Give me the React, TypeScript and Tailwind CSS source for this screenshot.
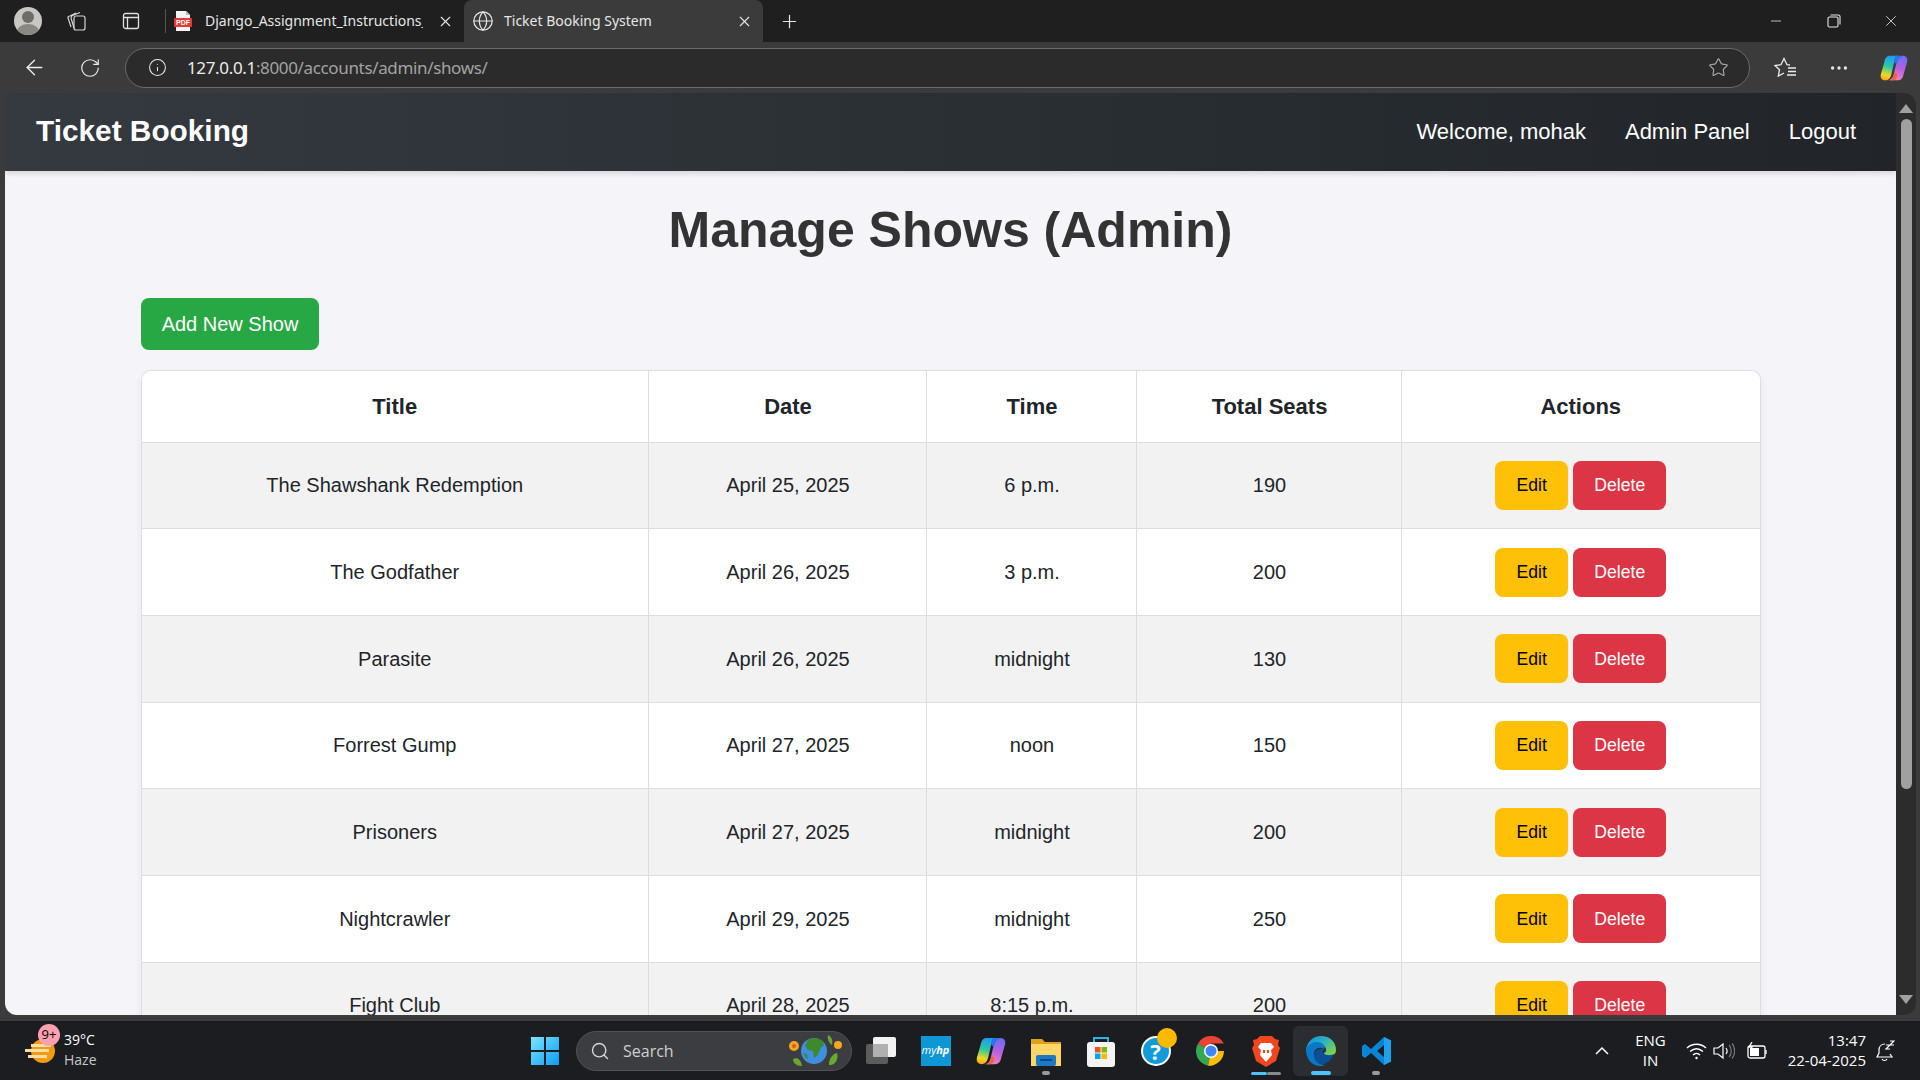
import { ArrowLeft, Ellipsis, Globe, Info, Minus, Plus, RotateCw, Search, Star, X } from "lucide-react";

const shows = [
  { title: "The Shawshank Redemption", date: "April 25, 2025", time: "6 p.m.", seats: 190 },
  { title: "The Godfather", date: "April 26, 2025", time: "3 p.m.", seats: 200 },
  { title: "Parasite", date: "April 26, 2025", time: "midnight", seats: 130 },
  { title: "Forrest Gump", date: "April 27, 2025", time: "noon", seats: 150 },
  { title: "Prisoners", date: "April 27, 2025", time: "midnight", seats: 200 },
  { title: "Nightcrawler", date: "April 29, 2025", time: "midnight", seats: 250 },
  { title: "Fight Club", date: "April 28, 2025", time: "8:15 p.m.", seats: 200 },
];

function Copilot({ size, id }: { size: number; id: string }) {
  return (
    <svg width={size} height={size} viewBox="0 0 32 32">
      <defs>
        <linearGradient id={`${id}a`} x1="0.5" y1="0" x2="0.3" y2="1">
          <stop offset="0" stopColor="#1a9df0" />
          <stop offset="0.45" stopColor="#2fc9a0" />
          <stop offset="0.8" stopColor="#f2d81f" />
          <stop offset="1" stopColor="#f5a623" />
        </linearGradient>
        <linearGradient id={`${id}b`} x1="0.7" y1="0" x2="0.4" y2="1">
          <stop offset="0" stopColor="#6d6df0" />
          <stop offset="0.5" stopColor="#b85fe0" />
          <stop offset="1" stopColor="#f082c0" />
        </linearGradient>
      </defs>
      <path d="M12 2H22C18 3 17 6 16 10L13 23C12 27 10 30 6 30 2 30 0 27 1 23L5 9C6 4 8 2 12 2z" fill={`url(#${id}a)`} />
      <path d="M20 30H10C14 29 15 26 16 22L19 9C20 5 22 2 26 2 30 2 32 5 31 9L27 23C26 28 24 30 20 30z" fill={`url(#${id}b)`} />
      <path d="M18 2h5c2 0 3 1 3 1-3 0-5 2-6 6l-1 3-3-3c1-4 1-6 2-7z" fill="#2477ee" />
      <path d="M10 30c3 0 5-2 6-6l1-3 3 3c-1 4-2 6-5 6z" fill="#f2603c" />
    </svg>
  );
}

function PdfIcon() {
  return (
    <svg width="18" height="22" viewBox="0 0 18 22">
      <path d="M2 1h10l4 4v16H2z" fill="#f4f4f4" />
      <path d="M12 1l4 4h-4z" fill="#bbb" />
      <rect x="0" y="8" width="18" height="9" rx="1" fill="#e53935" />
      <text x="9" y="15" textAnchor="middle" fontSize="7" fontWeight="700" fill="#fff" fontFamily="Liberation Sans, sans-serif">PDF</text>
    </svg>
  );
}

function TabStrip() {
  return (
    <div className="flex h-[42px] shrink-0 items-center bg-[#1f1f1f] text-[14px] text-[#e6e6e6]">
      <div className="ml-[14px] flex h-7 w-7 items-end justify-center overflow-hidden rounded-full bg-[#c9c7c2]">
        <svg width="28" height="28" viewBox="0 0 28 28">
          <circle cx="14" cy="10" r="6" fill="#6f6d6a" />
          <ellipse cx="14" cy="25" rx="11" ry="8" fill="#8a8885" />
        </svg>
      </div>
      <svg className="ml-[23px]" width="22" height="22" viewBox="0 0 22 22" fill="none" stroke="#d6d6d6" strokeWidth="1.2">
        <rect x="9" y="6" width="11" height="14" rx="2" />
        <path d="M6 17L3 8c0-1 0-2 2-2l6-3M9 18L6 8c0-1 .5-2 1.500-2.500L15 2.500" />
      </svg>
      <svg className="ml-[34px]" width="20" height="20" viewBox="0 0 20 20" fill="none" stroke="#e0e0e0" strokeWidth="1.3">
        <rect x="2.500" y="2.500" width="15" height="15" rx="2" />
        <path d="M2.500 6.500h15M6.500 6.500v11" />
      </svg>
      <div className="ml-[24px] h-6 w-px bg-[#555]" />
      <div className="ml-[8px] flex w-[290px] shrink-0 items-center">
        <PdfIcon />
        <span className="ml-[13px] w-[218px] shrink-0 overflow-hidden pb-[2px] whitespace-nowrap">Django_Assignment_Instructions_</span>
        <X className="ml-[14px] shrink-0" size={17} strokeWidth={1.5} />
      </div>
      <div className="flex h-[42px] w-[299px] shrink-0 items-center rounded-t-lg bg-[#3b3b3b] pl-[8px]">
        <Globe size={22} strokeWidth={1.3} />
        <span className="ml-[10px] w-[232px] pb-[2px] whitespace-nowrap">Ticket Booking System</span>
        <X className="shrink-0" size={17} strokeWidth={1.5} />
      </div>
      <Plus className="ml-[16px]" size={21} strokeWidth={1.4} />
      <div className="ml-auto flex items-center">
        <Minus size={16} strokeWidth={1.2} />
        <svg className="ml-[43px]" width="14" height="14" viewBox="0 0 14 14" fill="none" stroke="#e6e6e6" strokeWidth="1.100">
          <rect x="1" y="3" width="10" height="10" rx="1.500" />
          <path d="M3.500 1H11.500a1.500 1.500 0 0 1 1.500 1.500V10.500" />
        </svg>
        <X className="ml-[41px] mr-[20px]" size={18} strokeWidth={1.1} />
      </div>
    </div>
  );
}

function Toolbar() {
  return (
    <div className="flex h-[51px] shrink-0 items-center bg-[#3b3b3b] text-[#ececec]">
      <ArrowLeft className="ml-[22px]" size={25} strokeWidth={1.3} />
      <RotateCw className="ml-[32px]" size={22} strokeWidth={1.3} />
      <div className="ml-[24px] flex h-10 w-[1625px] shrink-0 items-center rounded-full border border-[#6a6a6a] bg-[#2b2b2b] pl-[22px] pr-[20px]">
        <Info size={19} strokeWidth={1.3} />
        <span className="ml-[20px] text-[17px] tracking-[-0.35px] whitespace-nowrap">
          127.0.0.1<span className="text-[#a3a3a3]">:8000/accounts/admin/shows/</span>
        </span>
        <Star className="ml-auto text-[#a8a8a8]" size={21} strokeWidth={1.3} />
      </div>
      <svg className="ml-[24px] shrink-0" width="24" height="24" viewBox="0 0 24 24" fill="none" stroke="#ececec" strokeWidth="1.300">
        <path d="M16 9l-3-.3L10 2.500 7 8.700l-6 .8 4.500 4.200L4.300 20l5.700-3" />
        <path d="M14 12h8M14 15.500h8M13 19h9" />
      </svg>
      <Ellipsis className="ml-[30px] shrink-0" size={22} strokeWidth={1.6} />
      <div className="ml-[30px] shrink-0">
        <Copilot size={28} id="cptop" />
      </div>
    </div>
  );
}

function Scrollbar() {
  return (
    <div className="flex h-[922px] w-[20px] shrink-0 flex-col items-center rounded-r-xl bg-[#2c2c2c] py-[11px]">
      <div className="h-0 w-0 border-x-[7px] border-b-[9px] border-x-transparent border-b-[#a0a0a0]" />
      <div className="mt-[6px] h-[670px] w-[11px] rounded-full bg-[#a0a0a0]" />
      <div className="mt-auto h-0 w-0 border-x-[7px] border-t-[9px] border-x-transparent border-t-[#a0a0a0]" />
    </div>
  );
}

function ShowsPage() {
  return (
    <div className="flex h-[922px] min-w-0 flex-1 flex-col overflow-hidden rounded-bl-xl bg-[#f4f4f9] font-['Liberation_Sans',Arial,sans-serif] text-[#212529]">
      <nav className="flex h-[78px] shrink-0 items-center justify-between bg-gradient-to-r from-[#343a40] to-[#212529] pb-[2px] pl-[31px] pr-[40px] text-white shadow-[0_2px_6px_rgba(0,0,0,0.15)]">
        <div className="text-[29.800px] font-bold">Ticket Booking</div>
        <div className="flex items-center gap-[39px] text-[22px]">
          <span>Welcome, mohak</span>
          <span>Admin Panel</span>
          <span>Logout</span>
        </div>
      </nav>
      <main className="flex-1 px-[136px]">
        <h1 className="mt-[29px] text-center text-[50px] leading-[60px] font-bold text-[#333]">Manage Shows (Admin)</h1>
        <button className="mt-[38px] block h-[52px] w-[178px] rounded-[8px] bg-[#28a745] text-[20px] text-white">
          Add New Show
        </button>
        <div className="mt-[20px] w-[1620px] overflow-hidden rounded-[10px] border border-[#ddd] bg-white shadow-[0_4px_8px_rgba(0,0,0,0.06)]">
          <table className="w-full table-fixed border-collapse text-center text-[20px]">
            <colgroup>
              <col className="w-[506px]" />
              <col className="w-[278px]" />
              <col className="w-[210px]" />
              <col className="w-[265px]" />
              <col />
            </colgroup>
            <thead>
              <tr className="h-[71px] bg-white text-[22px]">
                <th className="border-r border-b border-[#ddd] font-bold">Title</th>
                <th className="border-r border-b border-[#ddd] pl-[2px] font-bold">Date</th>
                <th className="border-r border-b border-[#ddd] pl-[2px] font-bold">Time</th>
                <th className="border-r border-b border-[#ddd] pl-[2px] font-bold">Total Seats</th>
                <th className="border-b border-[#ddd] font-bold">Actions</th>
              </tr>
            </thead>
            <tbody>
              {shows.map((show) => (
                <tr key={show.title} className="h-[86.700px] odd:bg-[#f2f2f2] even:bg-white">
                  <td className="border-r border-b border-[#ddd]">{show.title}</td>
                  <td className="border-r border-b border-[#ddd] pl-[2px]">{show.date}</td>
                  <td className="border-r border-b border-[#ddd] pl-[2px]">{show.time}</td>
                  <td className="border-r border-b border-[#ddd] pl-[2px]">{show.seats}</td>
                  <td className="border-b border-[#ddd]">
                    <div className="flex items-center justify-center gap-[5px] text-[17.600px]">
                      <button className="h-[49px] w-[73px] rounded-[8px] bg-[#ffc107] text-black">Edit</button>
                      <button className="h-[49px] w-[93px] rounded-[8px] bg-[#dc3545] text-white">Delete</button>
                    </div>
                  </td>
                </tr>
              ))}
            </tbody>
          </table>
        </div>
      </main>
    </div>
  );
}

function Slot({ children, active, dot }: { children: React.ReactNode; active?: boolean; dot?: "gray" | "blue" | "brave" }) {
  return (
    <div className={`relative flex h-[50px] w-[55px] shrink-0 items-center justify-center rounded-md ${active ? "bg-[#2b2d31]" : ""}`}>
      {children}
      {dot === "gray" && <div className="absolute bottom-[1px] h-[4px] w-[8px] rounded-full bg-[#9a9a9a]" />}
      {dot === "blue" && <div className="absolute bottom-[1px] h-[4px] w-[20px] rounded-full bg-[#4cc2ff]" />}
      {dot === "brave" && (
        <div className="absolute bottom-[1px] flex h-[3px] w-[30px]">
          <div className="w-[16px] rounded-full bg-[#4cc2ff]" />
          <div className="w-[14px] rounded-full bg-[#8a8a8a]" />
        </div>
      )}
    </div>
  );
}

function WindowsLogo() {
  return (
    <svg width="30" height="30" viewBox="0 0 30 30">
      <defs>
        <linearGradient id="win" x1="0" y1="0" x2="1" y2="1">
          <stop offset="0" stopColor="#7ce4fb" />
          <stop offset="1" stopColor="#0b9cf5" />
        </linearGradient>
      </defs>
      <path d="M1 1h13v13H1zM16 1h13v13H16zM1 16h13v13H1zM16 16h13v13H16z" fill="url(#win)" />
    </svg>
  );
}

function Taskbar() {
  return (
    <div className="flex h-[59px] shrink-0 items-center bg-[#1b1d21] font-['Open_Sans',sans-serif] text-white">
      {/* weather */}
      <div className="relative ml-[25px] flex w-[505px] shrink-0 items-center">
        <svg width="32" height="32" viewBox="0 0 32 32">
          <circle cx="18" cy="16" r="12" fill="#f29a10" />
          <path d="M6 9h20v3H6zM0 14h24v3H0zM3 20h19v3H3z" fill="#f6dfa5" />
        </svg>
        <div className="absolute top-[-8px] left-[13px] flex h-[22px] w-[22px] items-center justify-center rounded-full bg-[#ffa0ae] text-[13px] leading-none text-black">9+</div>
        <div className="ml-[7px] text-[14px] leading-[20px]">
          <div className="mt-[-2px]">39°C</div>
          <div className="text-[#c8c8c8]">Haze</div>
        </div>
      </div>
      <WindowsLogo />
      {/* search */}
      <div className="ml-[16px] flex h-[40px] w-[276px] shrink-0 items-center rounded-full border border-[#505256] bg-[#3c3d41] pl-[13px] pr-[8px]">
        <Search size={20} strokeWidth={1.7} className="text-[#d6d6d6]" />
        <span className="ml-[13px] text-[16px] text-[#cfcfcf]">Search</span>
        <svg className="ml-auto" width="56" height="36" viewBox="0 0 56 36">
          <circle cx="7" cy="13" r="5" fill="#f4a522" />
          <circle cx="7" cy="13" r="2" fill="#d95b18" />
          <circle cx="51" cy="12" r="4" fill="#f4a522" />
          <path d="M6 26c4-2 8 0 9 7-6 0-9-3-9-7zM50 20c2 6-2 13-8 12 0-6 3-11 8-12zM41 2c4 2 5 6 4 10-3-2-5-6-4-10z" fill="#6aa82e" />
          <circle cx="27" cy="18" r="13" fill="#3f8fe0" />
          <path d="M21 7c5-3 12-2 15 2 2 3 0 5-2 5l-3 8-4 3-1-7-5-1-3-4zM16 20l4 1 1 5-2-1z" fill="#3d8a2c" />
        </svg>
      </div>
      <div className="ml-[13px] w-[43px] shrink-0">
        <svg width="32" height="32" viewBox="0 0 32 32">
          <rect x="1" y="9" width="22" height="20" rx="2" fill="#5c5c5c" />
          <rect x="8" y="2" width="23" height="20" rx="2" fill="#f2f2f2" />
          <rect x="8" y="9" width="15" height="13" fill="#b0b0b0" />
        </svg>
      </div>
      {/* pinned apps */}
      <Slot>
        <div className="flex h-[30px] w-[30px] items-center justify-center bg-[#0f96d6] text-[11px] text-white italic">my<b>hp</b></div>
      </Slot>
      <Slot>
        <Copilot size={30} id="cpbar" />
      </Slot>
      <Slot dot="gray">
        <svg width="30" height="30" viewBox="0 0 30 30">
          <path d="M0 3h11l3 3h16v24H0z" fill="#e0a21a" />
          <path d="M0 8h30v22H0z" fill="#fcd765" />
          <rect x="5" y="19" width="20" height="11" rx="2" fill="#1c78c8" />
          <rect x="9" y="23" width="12" height="2" fill="#0d4a80" />
        </svg>
      </Slot>
      <Slot>
        <svg width="30" height="32" viewBox="0 0 30 32">
          <path d="M8 9V3h14v6" fill="none" stroke="#2bb3e8" strokeWidth="2" />
          <rect x="1" y="7" width="28" height="25" rx="3" fill="#f4f4f4" />
          <path d="M9 12h5.500v5.500H9z" fill="#f25022" />
          <path d="M15.500 12H21v5.500h-5.500z" fill="#7fba00" />
          <path d="M9 18.500h5.500V24H9z" fill="#00a4ef" />
          <path d="M15.500 18.500H21V24h-5.500z" fill="#ffb900" />
        </svg>
      </Slot>
      <Slot>
        <div className="relative flex h-[30px] w-[30px] items-center justify-center rounded-full border-2 border-white bg-[#139bd9] text-[22px] leading-none font-bold text-white">
          ?
          <div className="absolute top-[-10px] right-[-8px] h-5 w-5 rounded-full bg-[#ffb900]" />
        </div>
      </Slot>
      <Slot>
        <svg width="30" height="30" viewBox="0 0 30 30">
          <path d="M15 15L2 7.500A15 15 0 0 1 28 7.500H15z" fill="#ea4335" />
          <path d="M15 15L2 7.500A15 15 0 0 0 12 29.700z" fill="#34a853" />
          <path d="M15 15H28A15 15 0 0 1 12 29.700z" fill="#fbbc04" />
          <circle cx="15" cy="15" r="7" fill="#fff" />
          <circle cx="15" cy="15" r="5.500" fill="#4285f4" />
        </svg>
      </Slot>
      <Slot dot="brave">
        <svg width="28" height="32" viewBox="0 0 28 32">
          <path d="M8 1h12l3 3 4 1-1 5 2 3-4 13-10 6-10-6L0 13l2-3-1-5 4-1z" fill="#f1461e" />
          <path d="M9 8h10l3 4-3 3 1 5-6 7-6-7 1-5-3-3z" fill="#fff" />
          <path d="M11 15h2v3h-2zM15 15h2v3h-2z" fill="#f1461e" />
        </svg>
      </Slot>
      <Slot active dot="blue">
        <svg width="30" height="30" viewBox="0 0 30 30">
          <defs>
            <linearGradient id="edg" x1="0" y1="0" x2="1" y2="0.700">
              <stop offset="0" stopColor="#0c8fd8" />
              <stop offset="0.500" stopColor="#29b0c8" />
              <stop offset="1" stopColor="#7ed348" />
            </linearGradient>
          </defs>
          <path d="M15 0c9 0 15 6 15 14 0 4-3 6-7 6-3 0-5-1-5-3 2-1 3-3 1-6-3-3-9-3-13 0C3 14 1 18 0 14 1 6 7 0 15 0z" fill="url(#edg)" />
          <path d="M0 14c1-5 6-8 11-8 6 0 9 4 7 7-5-3-11 0-10 7 1 5 5 9 11 9-2 1-3 1-5 1C6 30 0 23 0 14z" fill="#0a78c8" />
          <path d="M8 19c1-5 5-7 10-6-1 2-2 3 0 5 2 1 6 2 10 0-3 7-9 11-13 10-4-1-7-5-7-9z" fill="#0b4f96" />
        </svg>
      </Slot>
      <Slot dot="gray">
        <svg className="ml-[2px]" width="30" height="30" viewBox="0 0 30 30">
          <path d="M22 1l7 3.500v21L22 29 9 17l-6 5-3-2v-10l3-2 6 5zM22 9l-7 6 7 6z" fill="#0a84d6" />
          <path d="M22 1l7 3.500v21L22 29z" fill="#1fa2ee" />
        </svg>
      </Slot>
      {/* tray */}
      <div className="ml-auto flex items-center pr-[25px]">
        <svg width="16" height="10" viewBox="0 0 16 10" fill="none" stroke="#fff" strokeWidth="1.500">
          <path d="M2 8l6-6 6 6" />
        </svg>
        <div className="ml-[25px] mt-[-2px] text-center text-[15px] leading-[20px]">
          <div>ENG</div>
          <div>IN</div>
        </div>
        <svg className="ml-[20px]" width="21" height="18" viewBox="0 0 21 18" fill="none" stroke="#fff" strokeWidth="1.400">
          <path d="M1 6c5-5 14-5 19 0M4 9.500c4-3.500 9-3.500 13 0M7 13c2-2 5-2 7 0" />
          <circle cx="10.500" cy="16" r="1.200" fill="#fff" stroke="none" />
        </svg>
        <svg className="ml-[6px]" width="22" height="18" viewBox="0 0 22 18" fill="none" stroke="#fff" strokeWidth="1.200">
          <path d="M1 6h4l5-4v14l-5-4H1z" />
          <path d="M13 6c1.500 2 1.500 4 0 6" />
          <path d="M16 3c3 3 3 9 0 12M19 1.500c3.500 4 3.500 11 0 15" stroke="#777" />
        </svg>
        <svg className="ml-[12px]" width="21" height="18" viewBox="0 0 21 18" fill="none" stroke="#fff" strokeWidth="1.300">
          <rect x="1" y="4" width="17" height="12" rx="2" />
          <rect x="3" y="6" width="9" height="8" fill="#fff" stroke="none" />
          <path d="M19 8v4" />
          <path d="M5 0L2 5h3l-1 4" />
        </svg>
        <div className="ml-[20px] mt-[-2px] text-right text-[15px] leading-[20px]">
          <div>13:47</div>
          <div>22-04-2025</div>
        </div>
        <svg className="ml-[9px]" width="20" height="22" viewBox="0 0 20 22" fill="none" stroke="#fff" strokeWidth="1.200">
          <path d="M10 4c-4 0-6 3-6 6v3l-2 4h15l-2-3" />
          <path d="M7 19c1 2 4 2 5 0" />
          <path d="M11 5h4l-4 4h4M15 1h4l-4 4h4" />
        </svg>
      </div>
    </div>
  );
}

export default function App() {
  return (
    <div className="flex h-screen w-full flex-col overflow-hidden bg-[#3b3b3b] font-['Noto_Sans',sans-serif]">
      <TabStrip />
      <Toolbar />
      <div className="flex h-[928px] shrink-0 items-start pl-[5px] pr-[4px]">
        <ShowsPage />
        <Scrollbar />
      </div>
      <Taskbar />
    </div>
  );
}
